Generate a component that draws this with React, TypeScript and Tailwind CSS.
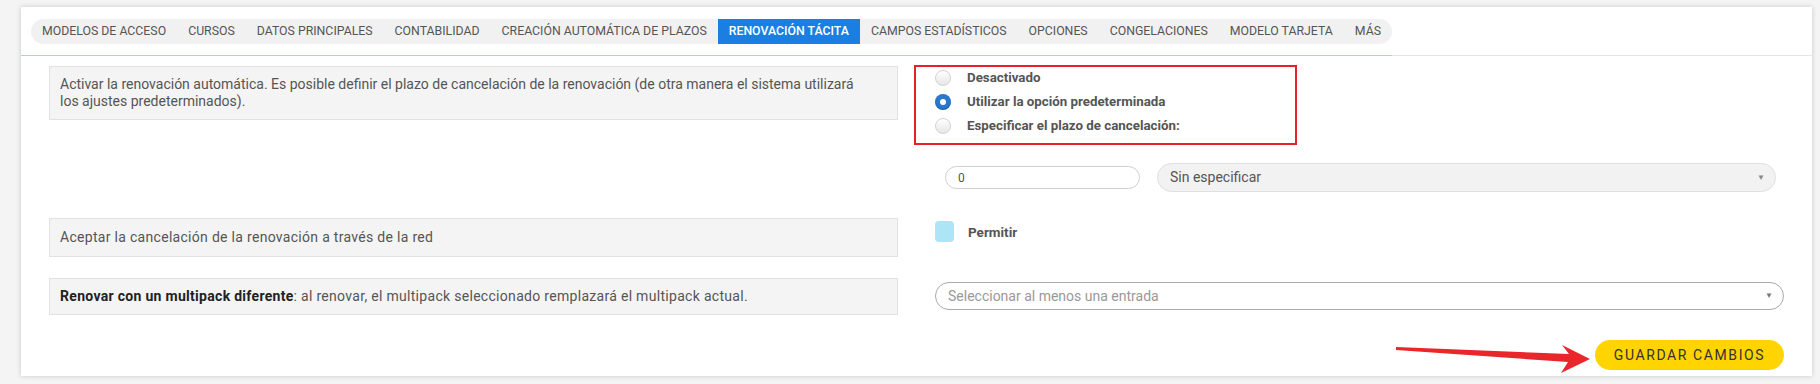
import React from 'react';

const tabs = [
  'MODELOS DE ACCESO',
  'CURSOS',
  'DATOS PRINCIPALES',
  'CONTABILIDAD',
  'CREACIÓN AUTOMÁTICA DE PLAZOS',
  'RENOVACIÓN TÁCITA',
  'CAMPOS ESTADÍSTICOS',
  'OPCIONES',
  'CONGELACIONES',
  'MODELO TARJETA',
  'MÁS',
];

const active = 'RENOVACIÓN TÁCITA';

const Radio: React.FC<{ checked?: boolean; label: string }> = ({ checked, label }) => (
  <label className="flex h-[24px] items-center">
    {checked ? (
      <span className="flex h-[16px] w-[16px] items-center justify-center rounded-full bg-[#2a78cf] shadow-[inset_0_-1px_2px_rgba(0,0,0,0.25)]">
        <span className="h-[6px] w-[6px] rounded-full bg-white" />
      </span>
    ) : (
      <span className="h-[16px] w-[16px] rounded-full border border-[#d2d2d2] bg-gradient-to-b from-[#ffffff] to-[#e6e6e6]" />
    )}
    <span className="ml-[16px] text-[13.3px] font-bold text-[#555]">{label}</span>
  </label>
);

const Label: React.FC<{ children: React.ReactNode; h: string }> = ({ children, h }) => (
  <div className={`${h} whitespace-nowrap border border-[#e2e2e2] bg-[#f4f4f4] px-[10px] text-[14px] leading-[17px] text-[#555]`}>
    {children}
  </div>
);

const App: React.FC = () => {
  return (
    <div className="relative h-[384px] overflow-hidden bg-[#f4f4f4] font-['Roboto',sans-serif]">
      <div className="ml-[21px] mr-[8px] mt-[7px] h-[369px] bg-white shadow-[0_0_5px_rgba(0,0,0,0.18)]">
        {/* tabs */}
        <div className="flex">
          <div className="border-b border-[#a3d2f4] pb-[11px] pl-[10px] pt-[12px]">
            <div className="flex h-[25px] items-center rounded-full bg-[#f1f1f1]">
              {tabs.map((t) => (
                <span
                  key={t}
                  className={`flex h-full items-center px-[11px] text-[12.3px] ${
                    t === active ? 'bg-[#1a7fe0] font-medium text-white' : 'text-[#555]'
                  }`}
                >
                  {t}
                </span>
              ))}
            </div>
          </div>
          <div className="flex-1 border-b border-[#e6e6e6]" />
        </div>

        <div className="px-[28px]">
          {/* row 1 */}
          <div className="mt-[10px] grid h-[97px] grid-cols-[849px_1fr] gap-x-[37px]">
            <Label h="h-[54px] pt-[9px]">
              Activar la renovación automática. Es posible definir el plazo de cancelación de la renovación (de otra manera el sistema utilizará
              <br />
              los ajustes predeterminados).
            </Label>
            <div className="relative">
              <div className="flex flex-col">
                <Radio label="Desactivado" />
                <Radio checked label="Utilizar la opción predeterminada" />
                <Radio label="Especificar el plazo de cancelación:" />
              </div>
              <div className="pointer-events-none absolute left-[-21px] top-[-1px] h-[80px] w-[383px] border-2 border-[#e8202a]" />
            </div>
          </div>

          {/* row 2 */}
          <div className="grid h-[29px] grid-cols-[849px_1fr] gap-x-[37px]">
            <div />
            <div className="flex items-center">
              <div className="ml-[10px] flex h-[23px] w-[195px] items-center rounded-full border border-[#cfcfcf] px-[12px] text-[12px] text-[#555]">
                0
              </div>
              <div className="ml-[17px] mr-[8px] flex h-[29px] flex-1 items-center justify-between rounded-full border border-[#e0e0e0] bg-[#f2f2f2] pl-[12px] pr-[10px] text-[14px] text-[#555]">
                <span>Sin especificar</span>
                <span className="text-[8px] text-[#888]">▼</span>
              </div>
            </div>
          </div>

          {/* row 3 */}
          <div className="mt-[26px] grid grid-cols-[849px_1fr] gap-x-[37px]">
            <Label h="h-[39px] flex items-center tracking-[0.3px]">Aceptar la cancelación de la renovación a través de la red</Label>
            <div className="flex items-start pt-[3px]">
              <span className="h-[21px] w-[19px] rounded-[4px] bg-[#aee5f6]" />
              <span className="ml-[14px] mt-[1px] text-[13.5px] font-bold text-[#555]">Permitir</span>
            </div>
          </div>

          {/* row 4 */}
          <div className="mt-[21px] grid grid-cols-[849px_1fr] gap-x-[37px]">
            <Label h="h-[37px] flex items-center tracking-[0.3px]">
              <span>
                <b className="text-[#222]">Renovar con un multipack diferente</b>: al renovar, el multipack seleccionado remplazará el multipack actual.
              </span>
            </Label>
            <div className="pt-[4px]">
              <div className="flex h-[28px] items-center justify-between rounded-full border border-[#aaa] pl-[12px] pr-[10px] text-[14px] text-[#999]">
                <span>Seleccionar al menos una entrada</span>
                <span className="text-[8px] text-[#777]">▼</span>
              </div>
            </div>
          </div>

          {/* footer */}
          <div className="mt-[25px] flex justify-end">
            <button className="flex h-[30px] w-[189px] items-center justify-center rounded-full bg-[#ffd400] text-[14px] font-normal tracking-[1.6px] text-[#333]">
              GUARDAR CAMBIOS
            </button>
          </div>
        </div>
      </div>

      {/* annotation arrow */}
      <svg className="pointer-events-none absolute left-0 top-0" width="1820" height="384">
        <polygon
          points="1396,347 1569,354 1562,345 1590,359 1561,373 1568,362 1396,350"
          fill="#e8262c"
        />
      </svg>
    </div>
  );
};

export default App;
